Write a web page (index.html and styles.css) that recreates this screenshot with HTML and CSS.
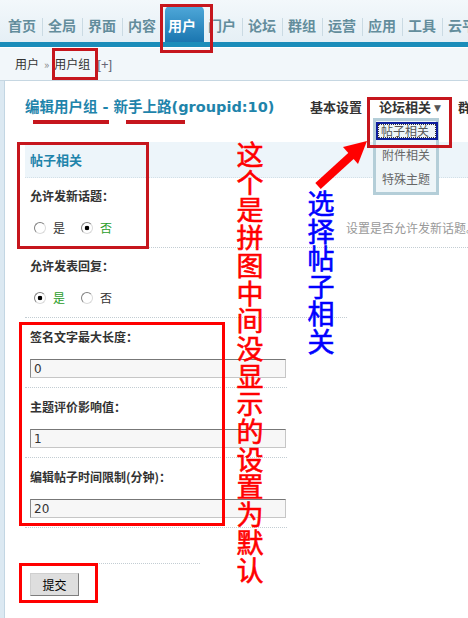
FILE: index.html
```html
<!DOCTYPE html>
<html lang="zh-CN">
<head>
<meta charset="utf-8">
<title>编辑用户组</title>
<link rel="stylesheet" href="styles.css">
</head>
<body>
<div class="nav">
  <span class="tab">首页</span><span class="tab">全局</span><span class="tab">界面</span><span class="tab">内容</span><span class="tab active">用户</span><span class="tab">门户</span><span class="tab">论坛</span><span class="tab">群组</span><span class="tab">运营</span><span class="tab">应用</span><span class="tab">工具</span><span class="tab">云平台</span>
</div>
<div class="bar"></div>
<div class="crumbs"><span>用户</span><span class="sep">»</span><span>用户组</span><span class="add">[+]</span></div>
<div class="page">
  <div class="edge"></div>
  <div class="content">
    <div class="head">
      <h1 class="title">编辑用户组 - 新手上路(groupid:10)</h1>
      <div class="subtabs"><span class="st">基本设置</span><span class="st">论坛相关 <i class="caret">▼</i></span><span class="st">群组权限</span></div>
    </div>
    <div class="section">帖子相关</div>
    <div class="row r1">
      <div class="cell">
        <div class="label">允许发新话题：</div>
        <div class="radios"><span class="radio"></span><span class="opt">是</span><span class="radio on second"></span><span class="opt sel">否</span></div>
      </div>
      <div class="desc">设置是否允许发新话题。</div>
    </div>
    <div class="row r2">
      <div class="cell">
        <div class="label">允许发表回复：</div>
        <div class="radios"><span class="radio on"></span><span class="opt sel">是</span><span class="radio second"></span><span class="opt">否</span></div>
      </div>
    </div>
    <div class="row ri">
      <div class="cell">
        <div class="label">签名文字最大长度：</div>
        <input class="inp" type="text" value="0">
      </div>
    </div>
    <div class="row ri">
      <div class="cell">
        <div class="label">主题评价影响值：</div>
        <input class="inp" type="text" value="1">
      </div>
    </div>
    <div class="row ri">
      <div class="cell">
        <div class="label">编辑帖子时间限制(分钟)：</div>
        <input class="inp" type="text" value="20">
      </div>
    </div>
    <div class="blank"></div>
    <div class="actions"><button class="btn" type="button">提交</button></div>
  </div>
</div>

<div class="menu">
  <div class="mi hl">帖子相关</div>
  <div class="mi">附件相关</div>
  <div class="mi">特殊主题</div>
</div>

<div class="box dark b-tab"></div>
<div class="box dark b-crumb"></div>
<div class="uline u1"></div>
<div class="uline u2"></div>
<div class="box dark b-sect"></div>
<div class="box dark b-menu"></div>
<div class="box bright b-inputs"></div>
<div class="box bright b-submit"></div>
<div class="vtext vred">这个是拼图中间没显示的设置为默认</div>
<div class="vtext vblue">选择帖子相关</div>
<svg class="arrow" width="468" height="618" viewBox="0 0 468 618">
  <line x1="318" y1="186" x2="352" y2="155" stroke="#ff0000" stroke-width="8"/>
  <polygon points="367,141 343,147 358,164" fill="#ff0000"/>
</svg>
</body>
</html>
```
FILE: styles.css
```css
body {
  margin: 0;
  width: 468px;
  height: 618px;
  overflow: hidden;
  position: relative;
  background: #fff;
  color: #333;
  font: 12px "Noto Sans CJK SC", sans-serif;
}

/* top navigation */
.nav {
  height: 42px;
  box-sizing: border-box;
  padding-left: 2px;
  display: flex;
  align-items: flex-end;
  white-space: nowrap;
  overflow: hidden;
  background: linear-gradient(#f3f8fb, #e5eff5);
}
.tab {
  position: relative;
  flex: none;
  height: 36px;
  box-sizing: border-box;
  padding: 3px 6px 0 6px;
  line-height: 33px;
  font-size: 14px;
  font-weight: bold;
  color: #638d9c;
}
.tab + .tab::before {
  content: "";
  position: absolute;
  left: 0;
  top: 12px;
  width: 1px;
  height: 18px;
  background: #cadae3;
}
.tab.active {
  padding: 3px 8px 0 3px;
  margin: 0 -2px 0 3px;
  color: #fff;
  border-radius: 5px 5px 0 0;
  background: linear-gradient(#4fa8d9, #1a76b0);
}
.tab.active::before,
.tab.active + .tab::before {
  display: none;
}
.bar {
  height: 5px;
  background: #1b8dba;
}
.crumbs {
  height: 34px;
  box-sizing: border-box;
  border-top: 1px solid #fff;
  border-bottom: 1px solid #c6d7e2;
  background: #f2f7fa;
  padding-left: 15px;
  line-height: 32px;
  font-size: 12px;
  color: #333;
}
.crumbs .sep {
  margin: 0 5px;
  color: #888;
  font-size: 11px;
}
.crumbs .add {
  margin-left: 7px;
  color: #667;
  font-family: "Liberation Sans", sans-serif;
  font-size: 13px;
}

/* page */
.page {
  display: flex;
  height: 537px;
}
.edge {
  width: 4px;
  flex: none;
  background: #dce9f2;
  border-right: 1px solid #c3d6e3;
}
.content {
  flex: 1;
  min-width: 0;
  padding-left: 20px;
  overflow: hidden;
}
.head {
  display: grid;
  grid-template-columns: 285px auto;
  height: 61px;
  box-sizing: border-box;
  padding-top: 16px;
  white-space: nowrap;
}
.title {
  margin: 0;
  font: bold 14.5px/20px "DejaVu Sans", "Noto Sans CJK SC", sans-serif;
  word-spacing: 0;
  color: #1f84ab;
}
.subtabs {
  overflow: hidden;
  font-size: 13px;
  font-weight: bold;
  line-height: 20px;
  color: #333;
}
.st {
  margin-right: 17px;
}
.caret {
  font-style: normal;
  font-size: 9px;
  color: #555;
  font-family: "DejaVu Sans", sans-serif;
  vertical-align: 1px;
}
.section {
  height: 36px;
  box-sizing: border-box;
  background: #edf5fa;
  border-bottom: 1px dotted #d3e0e8;
  padding-left: 5px;
  line-height: 35px;
  font-size: 13px;
  font-weight: bold;
  color: #1f84ab;
}
.row {
  height: 70px;
  box-sizing: border-box;
  border-bottom: 1px dotted #c3cdd3;
}
.r1 {
  display: grid;
  grid-template-columns: 321px 1fr;
}
.r2 {
  width: 322px;
}
.ri {
  width: 262px;
}
.cell {
  padding: 8px 0 0 5px;
}
.ri .cell {
  padding-top: 9px;
}
.label {
  line-height: 20px;
  font-weight: bold;
  color: #333;
  white-space: nowrap;
}
.radios {
  margin-top: 12px;
  height: 20px;
  display: flex;
  align-items: center;
}
.radio {
  width: 12px;
  height: 12px;
  box-sizing: border-box;
  margin: 0 7px 0 4px;
  border-radius: 50%;
  border: 1px solid;
  border-color: #808080 #dadada #dadada #808080;
  background: #fff;
}
.radio.second {
  margin-left: 16px;
}
.radio.on {
  background: radial-gradient(circle, #000 0 2px, #fff 2.6px);
}
.opt {
  line-height: 20px;
  color: #333;
}
.opt.sel {
  color: #2a9d2a;
}
.desc {
  padding-top: 40px;
  line-height: 20px;
  color: #999;
  white-space: nowrap;
}
.inp {
  display: block;
  margin: 12px 0 0 0;
  width: 256px;
  height: 19px;
  box-sizing: border-box;
  border: 1px solid;
  border-color: #777 #c6c6c6 #c6c6c6 #8a8a8a;
  background: #f7f7f7;
  padding: 0 3px;
  font: 12px/17px "DejaVu Sans", sans-serif;
  color: #333;
}
.blank {
  width: 175px;
  height: 36px;
  box-sizing: border-box;
  border-bottom: 1px dotted #c3cdd3;
}
.actions {
  padding: 9px 0 0 5px;
}
.btn {
  display: block;
  width: 49px;
  height: 23px;
  padding: 0;
  border: 1px solid;
  border-color: #cfcfcf #7d7d7d #7d7d7d #cfcfcf;
  background: #dedede;
  font: 12px "Noto Sans CJK SC", sans-serif;
  color: #000;
}

/* dropdown menu */
.menu {
  position: absolute;
  left: 373px;
  top: 118px;
  width: 66px;
  height: 77px;
  box-sizing: border-box;
  border: 3px solid #b4ced8;
  background: #eef5f8;
}
.mi {
  height: 24px;
  line-height: 24px;
  padding-left: 6px;
  color: #666;
  white-space: nowrap;
}
.mi.hl {
  height: 18px;
  margin: 1px -2px 3px 0;
  box-sizing: border-box;
  border: 2px solid #0c1e9e;
  outline: 1px dotted #333;
  outline-offset: -3px;
  padding-left: 3px;
  line-height: 14px;
  color: #555;
}

/* annotations */
.box {
  position: absolute;
  box-sizing: border-box;
  border: 3px solid;
}
.dark {
  border-color: #c6161d;
}
.bright {
  border-color: #ff0000;
}
.b-tab {
  left: 160px;
  top: 4px;
  width: 53px;
  height: 49px;
}
.b-crumb {
  left: 52px;
  top: 48px;
  width: 46px;
  height: 32px;
}
.b-sect {
  left: 17px;
  top: 142px;
  width: 132px;
  height: 107px;
}
.b-menu {
  left: 367px;
  top: 97px;
  width: 85px;
  height: 51px;
}
.b-inputs {
  left: 19px;
  top: 322px;
  width: 206px;
  height: 204px;
}
.b-submit {
  left: 19px;
  top: 563px;
  width: 79px;
  height: 40px;
}
.uline {
  position: absolute;
  top: 120px;
  height: 4px;
  background: #c6161d;
}
.u1 {
  left: 33px;
  width: 76px;
}
.u2 {
  left: 126px;
  width: 59px;
}
.vtext {
  position: absolute;
  width: 28px;
  font-size: 27px;
  line-height: 27.7px;
  text-align: center;
  word-break: break-all;
  -webkit-text-stroke: 0.6px currentColor;
}
.vred {
  left: 236px;
  top: 140px;
  color: #ff0000;
}
.vblue {
  left: 307px;
  top: 189px;
  line-height: 27.5px;
  color: #0000ff;
}
.arrow {
  position: absolute;
  left: 0;
  top: 0;
  pointer-events: none;
}
```
